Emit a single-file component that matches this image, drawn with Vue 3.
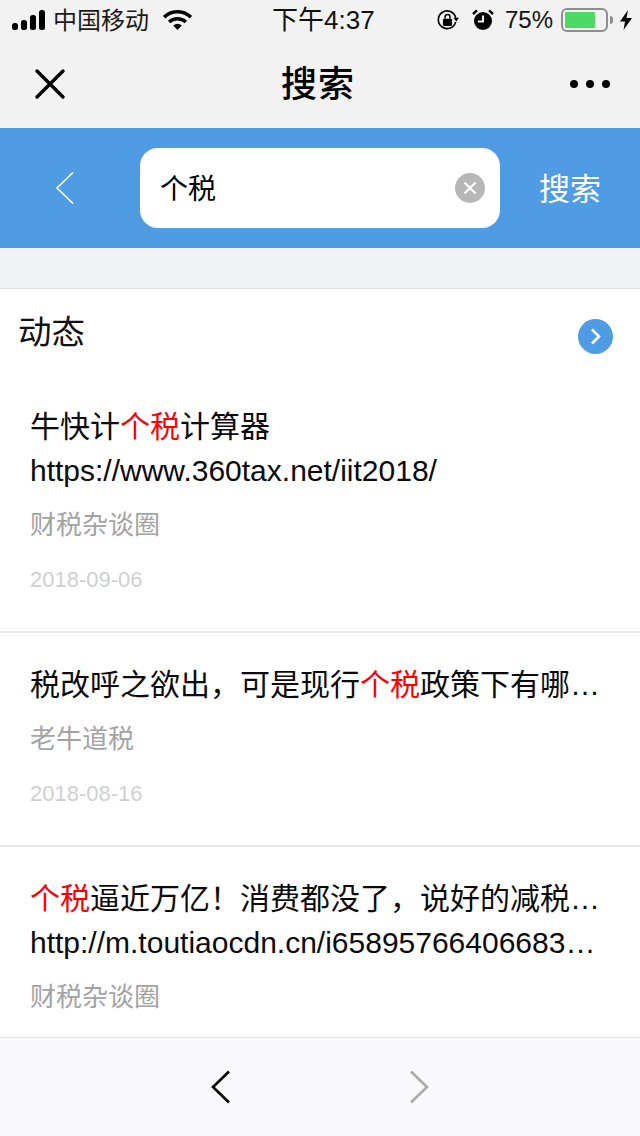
<script setup>
const items = [
  { lines: [[['牛快计'], ['个税', 1], ['计算器']], [['https://www.360tax.net/iit2018/']]], source: '财税杂谈圈', date: '2018-09-06' },
  { lines: [[['税改呼之欲出，可是现行'], ['个税', 1], ['政策下有哪…']]], source: '老牛道税', date: '2018-08-16' },
  { lines: [[['个税', 1], ['逼近万亿！消费都没了，说好的减税…']], [['http://m.toutiaocdn.cn/i65895766406683…']]], source: '财税杂谈圈', date: '' },
]
</script>

<template>
  <div class="page">
    <header class="chrome">
      <div class="status">
        <div class="status-left">
          <svg class="signal" width="36" height="20" viewBox="0 0 36 20">
            <rect x="0" y="13" width="6" height="7" rx="2.5" />
            <rect x="9" y="10" width="6" height="10" rx="2.5" />
            <rect x="18" y="5" width="6" height="15" rx="2.5" />
            <rect x="27" y="0" width="6" height="20" rx="2.5" />
          </svg>
          <span class="carrier">中国移动</span>
          <svg class="wifi" width="29" height="21" viewBox="0 0 30 22">
            <path d="M1 7.5 A20 20 0 0 1 29 7.5" fill="none" stroke="#000" stroke-width="3.6" />
            <path d="M6.2 12.6 A13 13 0 0 1 23.8 12.6" fill="none" stroke="#000" stroke-width="3.6" />
            <path d="M10.5 16.2 A7 7 0 0 1 19.5 16.2 L15 21 Z" fill="#000" />
          </svg>
        </div>
        <span class="time">下午4:37</span>
        <div class="status-right">
          <svg class="lock" width="22" height="22" viewBox="0 0 24 24">
            <path d="M20.4 14 A9.6 9.6 0 1 1 20.4 9.5" fill="none" stroke="#000" stroke-width="1.8" />
            <path d="M18 9.5 L24 9.5 L21 13.5 Z" fill="#000" />
            <rect x="6.5" y="10.5" width="10" height="8" rx="1.2" fill="#000" />
            <path d="M8.8 10.5 V8.6 A2.7 2.7 0 0 1 14.2 8.6 V10.5" fill="none" stroke="#000" stroke-width="1.6" />
          </svg>
          <svg class="alarm" width="22" height="24" viewBox="0 0 22 24">
            <circle cx="11" cy="13" r="9" fill="#000" />
            <path d="M11 7.5 V13.5 H6" fill="none" stroke="#f2f2f2" stroke-width="2" />
            <path d="M1 6 L5 2.4 M21 6 L17 2.4" stroke="#000" stroke-width="2.4" />
          </svg>
          <span class="percent">75%</span>
          <div class="battery"><div class="battery-fill"></div></div>
          <span class="battery-tip"></span>
          <svg width="12" height="20" viewBox="0 0 12 20"><path d="M8 0 L0 11.5 H5 L3.5 20 L12 8 H6.5 Z" fill="#000" /></svg>
        </div>
      </div>
      <div class="nav">
        <svg width="32" height="32" viewBox="0 0 32 32">
          <path d="M3 3 L29 29 M29 3 L3 29" stroke="#000" stroke-width="3.4" stroke-linecap="round" />
        </svg>
        <h1 class="nav-title">搜索</h1>
        <div class="dots"><i></i><i></i><i></i></div>
      </div>
    </header>

    <div class="search">
      <svg class="search-back" width="20" height="34" viewBox="0 0 20 34">
        <path d="M18 1.5 L2 17 L18 32.5" fill="none" stroke="#fff" stroke-width="1.6" />
      </svg>
      <div class="input">
        <span class="query">个税</span>
        <svg width="30" height="30" viewBox="0 0 30 30">
          <circle cx="15" cy="15" r="15" fill="#b7b7b7" />
          <path d="M9.5 9.5 L20.5 20.5 M20.5 9.5 L9.5 20.5" stroke="#fff" stroke-width="2.2" />
        </svg>
      </div>
      <span class="search-btn">搜索</span>
    </div>

    <main class="content">
      <div class="section-head">
        <span class="section-title">动态</span>
        <svg width="35" height="35" viewBox="0 0 35 35">
          <circle cx="17.5" cy="17.5" r="17.5" fill="#4f9ce4" />
          <path d="M14 10.5 L21 17.5 L14 24.5" fill="none" stroke="#fff" stroke-width="2.6" />
        </svg>
      </div>
      <article v-for="(item, i) in items" :key="i" class="item">
        <div v-for="(line, j) in item.lines" :key="j" class="title">
          <template v-for="(seg, k) in line" :key="k"><span :class="{ hit: seg[1] }">{{ seg[0] }}</span></template>
        </div>
        <div class="source">{{ item.source }}</div>
        <div v-if="item.date" class="date">{{ item.date }}</div>
      </article>
    </main>

    <footer class="toolbar">
      <svg width="20" height="34" viewBox="0 0 20 34">
        <path d="M18 1.5 L2 17 L18 32.5" fill="none" stroke="#000" stroke-width="2.6" />
      </svg>
      <svg width="20" height="34" viewBox="0 0 20 34">
        <path d="M2 1.5 L18 17 L2 32.5" fill="none" stroke="#ababab" stroke-width="2.6" />
      </svg>
    </footer>
  </div>
</template>

<style scoped>
.page {
  width: 640px;
  height: 1136px;
  display: flex;
  flex-direction: column;
  overflow: hidden;
  background: #f0f3f6;
  color: #000;
  font-family: "Liberation Sans", "Noto Sans CJK SC", sans-serif;
}
.chrome { background: #f2f2f2; height: 128px; flex: none; }
.status {
  height: 40px;
  display: flex;
  align-items: center;
  justify-content: space-between;
  padding: 0 8px 0 12px;
  position: relative;
}
.status-left, .status-right { display: flex; align-items: center; }
.signal { fill: #000; margin-right: 5px; }
.carrier { font-size: 24px; color: #1a1a1a; margin-top: -4px; }
.wifi { margin-left: 14px; }
.time {
  position: absolute;
  left: 272px;
  top: 2px;
  font-size: 26px;
  line-height: 36px;
  color: #111;
}
.lock { margin-right: 13px; }
.alarm { margin-right: 11px; }
.percent { font-size: 24px; color: #111; margin-right: 8px; }
.battery {
  width: 47px;
  height: 24px;
  box-sizing: border-box;
  border: 2px solid #8e8e8e;
  border-radius: 6px;
  padding: 2px;
}
.battery-fill { width: 30px; height: 16px; background: #4cd964; border-radius: 1px; }
.battery-tip {
  width: 3px;
  height: 8px;
  background: #8e8e8e;
  border-radius: 0 3px 3px 0;
  margin: 0 7px 0 2px;
}
.nav {
  height: 87px;
  display: flex;
  align-items: center;
  justify-content: space-between;
  padding: 0 30px 0 34px;
  position: relative;
}
.nav-title {
  position: absolute;
  left: 281px;
  margin: 0;
  font-size: 36px;
  font-weight: 500;
  letter-spacing: 1px;
  line-height: 87px;
  top: 1px;
}
.dots { display: flex; gap: 8px; }
.dots i { width: 8px; height: 8px; border-radius: 50%; background: #000; }

.search {
  height: 120px;
  flex: none;
  background: #4f9ce4;
  display: flex;
  align-items: center;
  padding-left: 55px;
  box-sizing: border-box;
}
.search-back { margin-right: 65px; }
.input {
  width: 360px;
  height: 80px;
  background: #fff;
  border-radius: 18px;
  display: flex;
  align-items: center;
  justify-content: space-between;
  padding: 0 15px 0 20px;
  box-sizing: border-box;
}
.query { font-size: 28px; margin-top: -2px; }
.search-btn { margin-left: 39px; font-size: 31px; color: #fff; margin-top: -3px; }

.content {
  flex: 1;
  min-height: 0;
  overflow: hidden;
  margin-top: 40px;
  border-top: 1px solid #e2e2e2;
  background: #fff;
}
.section-head {
  height: 92px;
  display: flex;
  align-items: center;
  justify-content: space-between;
  padding: 0 27px 0 18px;
}
.section-title { font-size: 33.5px; color: #111; margin-top: -12px; }
.section-head svg { margin-top: 2px; }
.item {
  padding: 24px 30px 0;
  height: 252px;
  box-sizing: border-box;
  border-bottom: 2px solid #e8e8e8;
}
.item + .item { height: 214px; padding-top: 30px; }
.title {
  font-size: 30px;
  line-height: 44px;
  color: #0a0a0a;
  white-space: nowrap;
}
.hit { color: #f00; }
.source { font-size: 26px; line-height: 36px; color: #a3a3a3; margin-top: 14px; }
.date { font-size: 22px; line-height: 28px; color: #cfcfcf; margin-top: 23px; }

.toolbar {
  height: 99px;
  flex: none;
  background: #f9f9fb;
  border-top: 1px solid #e4e4e4;
  box-sizing: border-box;
  display: flex;
  align-items: center;
  justify-content: center;
  gap: 178px;
}
</style>
